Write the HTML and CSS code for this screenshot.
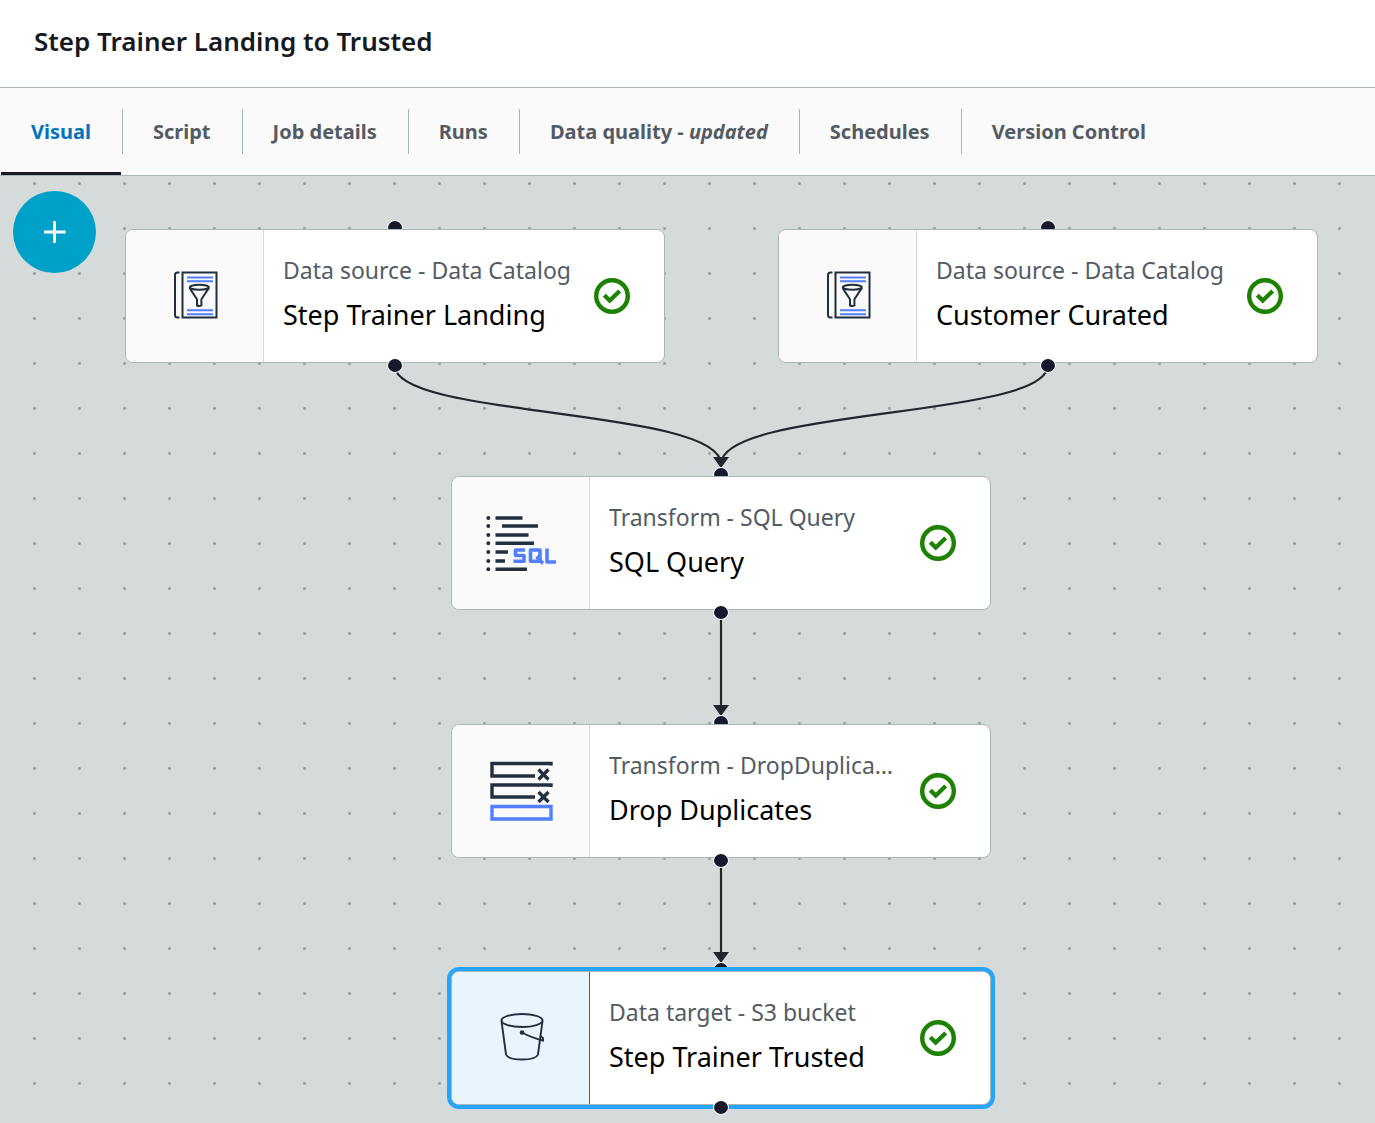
FILE: index.html
```html
<!DOCTYPE html>
<html lang="en">
<head>
<meta charset="utf-8">
<title>Step Trainer Landing to Trusted</title>
<link rel="stylesheet" href="styles.css">
</head>
<body>
<svg class="defs" aria-hidden="true">
  <symbol id="check" viewBox="0 0 36 36">
    <circle cx="18" cy="18" r="15.8" fill="none" stroke="#1d8102" stroke-width="4.4"/>
    <path d="M10.3 17.2l5.4 5.4 10-9.6" fill="none" stroke="#1d8102" stroke-width="4.2"/>
  </symbol>
  <symbol id="catalog" viewBox="-3 3 75 75">
    <g fill="none" stroke="#232f3e" stroke-width="2">
      <path d="M22.5 16.5h34v45h-34z"/>
      <path d="M19.5 16.5h-2q-2.500 0-2.500 2.500v40q0 2.500 2.500 2.500h2"/>
      <ellipse cx="39.300" cy="31.300" rx="9.500" ry="2.500"/>
      <path d="M29.800 31.500q.2 1.500 1.200 2.700l6 9v6.300q2.300 1.200 4.400 0v-6.300l6-9q1.200-1.200 1.400-2.700"/>
    </g>
    <path d="M27 21.500h26M27 25.300h26M27 54.300h26M27 58.300h26" stroke="#527fff" stroke-width="2"/>
  </symbol>
</svg>

<header class="page-header">
  <h1 class="page-title">Step Trainer Landing to Trusted</h1>
</header>

<nav class="tabs" role="tablist" aria-label="Job views">
  <button class="tab tab-active" role="tab" aria-selected="true">Visual</button>
  <button class="tab" role="tab">Script</button>
  <button class="tab" role="tab">Job details</button>
  <button class="tab" role="tab">Runs</button>
  <button class="tab" role="tab">Data quality - <em>updated</em></button>
  <button class="tab" role="tab">Schedules</button>
  <button class="tab" role="tab">Version Control</button>
</nav>

<main class="canvas">
  <svg class="edges" aria-hidden="true">
    <g fill="none" stroke="#21252c" stroke-width="2.200">
      <path d="M395 190C395 242 721 232 721 288"/>
      <path d="M1047.500 190C1047.500 242 721 232 721 288"/>
      <path d="M721 436V534"/>
      <path d="M721 684V782"/>
    </g>
    <g fill="#21252c">
      <path d="M713 281h16l-8 11z"/>
      <path d="M713 529h16l-8 11z"/>
      <path d="M713 776h16l-8 11z"/>
    </g>
  </svg>

  <button class="add-node" aria-label="Add node">
    <svg width="22" height="22" viewBox="0 0 22 22"><path d="M10.500 0v22M0 11h21.500" stroke="#fff" stroke-width="3"/></svg>
  </button>

  <article class="node node-landing">
    <span class="port port-in"></span>
    <div class="card">
      <div class="card-icon"><svg width="75" height="75"><use href="#catalog"/></svg></div>
      <div class="card-text">
        <p class="card-kind">Data source - Data Catalog</p>
        <h2 class="card-name">Step Trainer Landing</h2>
      </div>
      <svg class="status" role="img" aria-label="Valid"><use href="#check"/></svg>
    </div>
    <span class="port port-out"></span>
  </article>

  <article class="node node-customer">
    <span class="port port-in"></span>
    <div class="card">
      <div class="card-icon"><svg width="75" height="75"><use href="#catalog"/></svg></div>
      <div class="card-text">
        <p class="card-kind">Data source - Data Catalog</p>
        <h2 class="card-name">Customer Curated</h2>
      </div>
      <svg class="status" role="img" aria-label="Valid"><use href="#check"/></svg>
    </div>
    <span class="port port-out"></span>
  </article>

  <article class="node node-sql">
    <span class="port port-in"></span>
    <div class="card">
      <div class="card-icon">
        <svg width="90" height="76" viewBox="1 0 90 76">
          <path d="M20.500 13h27M27 21h36M20.500 30h33M20.500 38.300h38.500M20.500 47h12.500M20.500 56h9.500M20.500 64.300h31.500" stroke="#232f3e" stroke-width="3.600"/>
          <path d="M13.300 13h.01M13.300 21h.01M13.300 30h.01M13.300 38.300h.01M13.300 47h.01M13.300 56h.01M13.300 64.300h.01" stroke="#232f3e" stroke-width="4" stroke-linecap="round"/>
          <path d="M50 45h-9.500v5.500h8.500v5.700h-10.500M55.500 45h9.500v11.200h-9.500zM61.500 51.500l6.500 7M72 43.500v13.500h9" fill="none" stroke="#527fff" stroke-width="3.600" stroke-linejoin="round"/>
        </svg>
      </div>
      <div class="card-text">
        <p class="card-kind">Transform - SQL Query</p>
        <h2 class="card-name">SQL Query</h2>
      </div>
      <svg class="status" role="img" aria-label="Valid"><use href="#check"/></svg>
    </div>
    <span class="port port-out"></span>
  </article>

  <article class="node node-dedupe">
    <span class="port port-in"></span>
    <div class="card">
      <div class="card-icon">
        <svg width="90" height="80" viewBox="1 1.500 90 80">
          <g fill="none" stroke="#232f3e" stroke-width="3.400">
            <path d="M76 16v-2H17v12.500h43M76 37.500v-2H17v12h43"/>
            <path d="M63.500 20l10 10M73.500 20l-10 10M63.500 42.500l10 10M73.500 42.500l-10 10"/>
          </g>
          <path d="M17 57h59v12.500H17z" fill="none" stroke="#527fff" stroke-width="3.400"/>
        </svg>
      </div>
      <div class="card-text">
        <p class="card-kind">Transform - DropDuplicates</p>
        <h2 class="card-name">Drop Duplicates</h2>
      </div>
      <svg class="status" role="img" aria-label="Valid"><use href="#check"/></svg>
    </div>
    <span class="port port-out"></span>
  </article>

  <article class="node node-target node-selected">
    <span class="port port-in"></span>
    <div class="card">
      <div class="card-icon">
        <svg width="50" height="50" viewBox="-4 1 50 50">
          <g fill="none" stroke="#232f3e" stroke-width="1.900">
            <ellipse cx="22" cy="8.500" rx="20.500" ry="6.500"/>
            <path d="M1.500 9l4.500 33.500q2 5 16 5t16-5L42.500 9"/>
            <path d="M22 20.500q9 5 21 8v-2.500l-3-2"/>
          </g>
          <circle cx="22" cy="20.500" r="2.300" fill="#232f3e"/>
        </svg>
      </div>
      <div class="card-text">
        <p class="card-kind">Data target - S3 bucket</p>
        <h2 class="card-name">Step Trainer Trusted</h2>
      </div>
      <svg class="status" role="img" aria-label="Valid"><use href="#check"/></svg>
    </div>
    <span class="port port-out"></span>
  </article>
</main>
</body>
</html>
```
FILE: styles.css
```css
* {
  box-sizing: border-box;
}

body {
  margin: 0;
  min-height: 100vh;
  display: flex;
  flex-direction: column;
  font-family: "Noto Sans", "Open Sans", sans-serif;
  color: #16191f;
  background: #fff;
}

.defs {
  display: none;
}

.page-header {
  padding: 23px 34px 28px;
  border-bottom: 1px solid #aab7b8;
}

.page-title {
  margin: 0;
  font-size: 26px;
  line-height: 36px;
  font-weight: 600;
}

.tabs {
  display: flex;
  align-items: stretch;
  height: 88px;
  background: #fafafa;
  border-bottom: 1px solid #aab7b8;
}

.tab {
  position: relative;
  padding: 0 31px;
  border: 0;
  background: none;
  font: 700 20px/28px "Noto Sans", "Open Sans", sans-serif;
  color: #545b64;
  white-space: nowrap;
  cursor: pointer;
}

.tab + .tab::before {
  content: "";
  position: absolute;
  left: 0;
  top: 21px;
  bottom: 21px;
  width: 1px;
  background: #aab7b8;
}

.tab-active {
  color: #0073bb;
}

.tab-active::after {
  content: "";
  position: absolute;
  left: 1px;
  right: 1px;
  bottom: 0;
  height: 3px;
  background: #16191f;
}

.canvas {
  position: relative;
  flex: 1;
  min-height: 947px;
  overflow: hidden;
  background: #d5dbdb radial-gradient(circle, #9ba2a3 1px, transparent 2px) 12px -15px / 45px 45px;
}

.edges {
  position: absolute;
  inset: 0;
  width: 100%;
  height: 100%;
}

.add-node {
  position: absolute;
  left: 13px;
  top: 15px;
  width: 83px;
  height: 82px;
  padding: 0;
  display: grid;
  place-items: center;
  border: 0;
  border-radius: 50%;
  background: #00a1c9;
  cursor: pointer;
}

.node {
  position: absolute;
  width: 540px;
}

.node-landing {
  left: 125px;
  top: 53px;
}

.node-customer {
  left: 778px;
  top: 53px;
}

.node-sql {
  left: 451px;
  top: 300px;
}

.node-dedupe {
  left: 451px;
  top: 548px;
}

.node-target {
  left: 451px;
  top: 795px;
}

.card {
  position: relative;
  display: flex;
  align-items: center;
  height: 134px;
  padding-right: 34px;
  border: 1px solid #aab7b8;
  border-radius: 8px;
  background: #fff;
}

.card-icon {
  flex: none;
  width: 138px;
  align-self: stretch;
  display: grid;
  place-items: center;
  border-right: 1px solid #d5dbdb;
  border-radius: 7px 0 0 7px;
  background: #fafafa;
}

.card-text {
  flex: 1;
  min-width: 0;
  padding: 0 20px 4px 19px;
}

.card-kind,
.card-name {
  margin: 0;
  overflow: hidden;
  text-overflow: ellipsis;
  white-space: nowrap;
  font-weight: 400;
}

.card-kind {
  font-size: 23px;
  line-height: 42px;
  color: #545b64;
}

.card-name {
  font-size: 27px;
  line-height: 48px;
  color: #000;
}

.status {
  flex: none;
  width: 36px;
  height: 36px;
}

.port {
  position: absolute;
  left: 262px;
  width: 16px;
  height: 15px;
  border: 1px solid #fff;
  border-radius: 50%;
  background: #16192b;
}

.port-in {
  top: -9px;
}

.port-out {
  bottom: -10px;
}

.node-selected .card {
  box-shadow: 0 0 0 4px #25a5fb;
}

.node-selected .card-icon {
  background: #e9f5fe;
  border-right-color: #0073bb;
}
```
